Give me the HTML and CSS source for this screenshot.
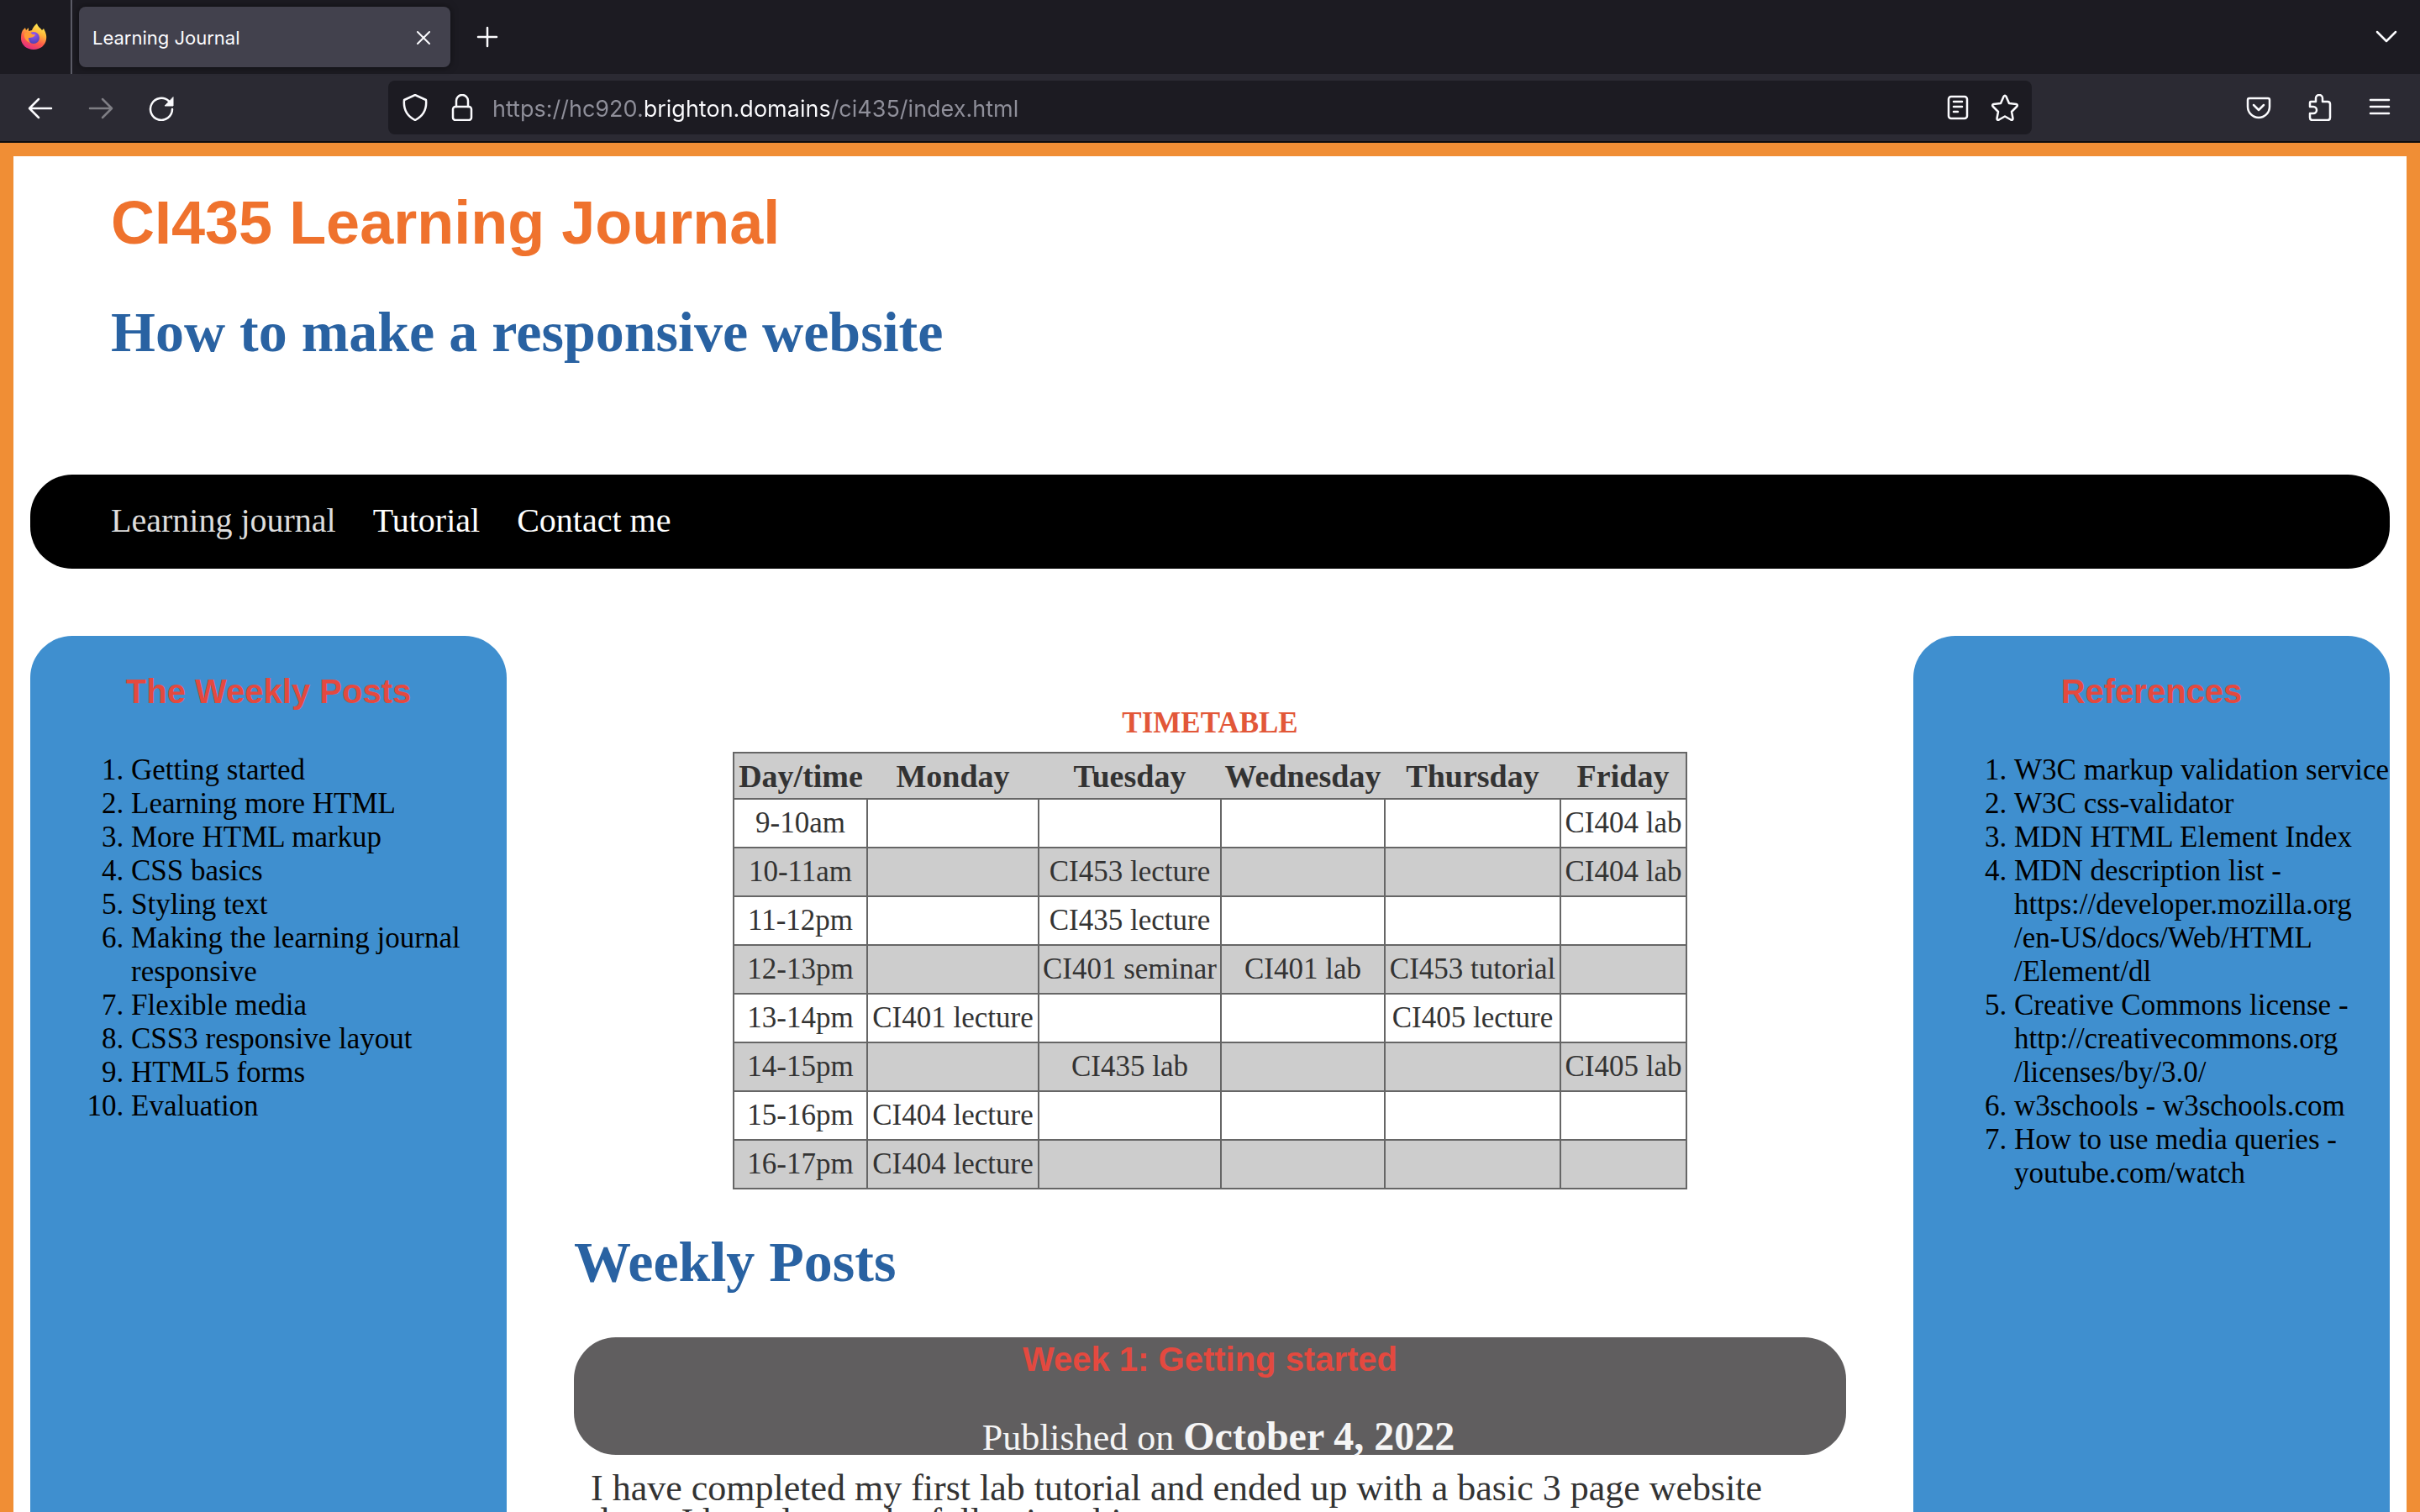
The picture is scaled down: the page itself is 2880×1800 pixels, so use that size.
FILE: index.html
```html
<!DOCTYPE html>
<html lang="en">
<head>
<meta charset="utf-8">
<title>Learning Journal</title>
<link rel="stylesheet" href="styles.css">
</head>
<body>
<div class="browser">
  <div class="tabs">
    <svg class="firefox" viewBox="0 0 32 32" aria-hidden="true">
      <defs>
        <linearGradient id="flame" x1="0.75" y1="0" x2="0.3" y2="1">
          <stop offset="0" stop-color="#fff255"/><stop offset="0.35" stop-color="#ffb53a"/><stop offset="0.65" stop-color="#ff5b4a"/><stop offset="1" stop-color="#e02a86"/>
        </linearGradient>
        <radialGradient id="globe" cx="0.5" cy="0.2" r="0.8">
          <stop offset="0" stop-color="#9b55f5"/><stop offset="1" stop-color="#4f42b5"/>
        </radialGradient>
      </defs>
      <path fill="url(#flame)" d="M3 8 6 5l1 3 3-3v4l4-1c1-3 3-6 6-8 1 4 4 5 6 8l2-2c2 4 4 8 3 13-1 7-7 12-15 12S2 26 1 19c0-4 0-8 2-11z"/>
      <circle cx="16" cy="17" r="7" fill="url(#globe)"/>
      <path fill="#ff9a36" d="M5 12c4-3 7-2 10 1h3c-1 3-4 4-8 4 0 3 1 4 2 6-5-2-8-6-7-11z"/>
    </svg>
    <div class="tab">
      <span class="tab-title">Learning Journal</span>
      <button class="icon-button" type="button" aria-label="Close tab">
        <svg viewBox="0 0 32 32"><path class="thin" d="M9 9l14 14M23 9L9 23"/></svg>
      </button>
    </div>
    <button class="icon-button new-tab" type="button" aria-label="New tab">
      <svg viewBox="0 0 32 32"><path d="M16 5v22M5 16h22"/></svg>
    </button>
    <button class="icon-button all-tabs" type="button" aria-label="List all tabs">
      <svg viewBox="0 0 32 32"><path d="M5 10l11 11 11-11"/></svg>
    </button>
  </div>
  <div class="toolbar">
    <div class="icon-group">
      <button class="icon-button" type="button" aria-label="Back">
        <svg viewBox="0 0 32 32"><path d="M29 17H4M14 6L3 17l11 11"/></svg>
      </button>
      <button class="icon-button" type="button" aria-label="Forward" disabled>
        <svg viewBox="0 0 32 32"><path d="M3 17h25M18 6l11 11-11 11"/></svg>
      </button>
      <button class="icon-button" type="button" aria-label="Reload">
        <svg viewBox="0 0 32 32"><path d="M29 18a13 13 0 1 1-4-9.500"/><path class="solid" d="M30 4v10H20.500z"/></svg>
      </button>
    </div>
    <div class="spacer"></div>
    <div class="address">
      <div class="address-icons">
        <button class="icon-button" type="button" aria-label="Tracking protection">
          <svg viewBox="0 0 32 32"><path d="M16 1l13 6c1 10-3 19-13 24C6 26 2 17 3 7z"/></svg>
        </button>
        <button class="icon-button" type="button" aria-label="Site information">
          <svg viewBox="0 0 32 32"><rect x="5" y="15" width="22" height="16" rx="3"/><path d="M9 15V8a7 7 0 0 1 14 0v7"/></svg>
        </button>
      </div>
      <input class="url" type="text" aria-label="Address" value="https://hc920.brighton.domains/ci435/index.html">
      <div class="address-icons">
        <button class="icon-button" type="button" aria-label="Reader view">
          <svg viewBox="0 0 32 32"><rect x="5" y="3" width="22" height="26" rx="3"/><path d="M11 9h10M11 15h10M11 21h5"/></svg>
        </button>
        <button class="icon-button" type="button" aria-label="Bookmark this page">
          <svg viewBox="0 0 32 32"><path d="M14.500 3q1.500-2.500 3 0l3.500 8 8.500 1q2.500 1 .5 3l-6 6 1.500 8q0 2.500-2.500 1.500L16 26.500 9 30.500q-2.500 1-2.500-1.500L8 21l-6-6q-2-2 .5-3l8.500-1z"/></svg>
        </button>
      </div>
    </div>
    <div class="spacer"></div>
    <div class="icon-group">
      <button class="icon-button" type="button" aria-label="Save to Pocket">
        <svg viewBox="0 0 32 32"><path d="M5 5h22a2 2 0 0 1 2 2v8a13 13 0 0 1-26 0V7a2 2 0 0 1 2-2zM10 13l6 6 6-6"/></svg>
      </button>
      <button class="icon-button" type="button" aria-label="Extensions">
        <svg viewBox="0 0 32 32"><path d="M6 9h6V5a4 4 0 0 1 8 0v4h6q3 0 3 3v16q0 3-3 3H8q-3 0-3-3v-5h4a4 4 0 0 0 0-8H5v-4q0-2 1-2z"/></svg>
      </button>
      <button class="icon-button" type="button" aria-label="Open menu">
        <svg viewBox="0 0 32 32"><path d="M5 7h22M5 15h22M5 23h22"/></svg>
      </button>
    </div>
  </div>
</div>

<div class="viewport">
  <div class="site">
    <header class="masthead">
      <h1>CI435 Learning Journal</h1>
      <h2>How to make a responsive website</h2>
    </header>
    <nav class="menu">
      <a class="current" href="#journal">Learning journal</a>
      <a href="#tutorial">Tutorial</a>
      <a href="#contact">Contact me</a>
    </nav>
    <div class="columns">
      <aside class="card">
        <h3>The Weekly Posts</h3>
        <ol>
          <li>Getting started</li>
          <li>Learning more HTML</li>
          <li>More HTML markup</li>
          <li>CSS basics</li>
          <li>Styling text</li>
          <li>Making the learning journal responsive</li>
          <li>Flexible media</li>
          <li>CSS3 responsive layout</li>
          <li>HTML5 forms</li>
          <li>Evaluation</li>
        </ol>
      </aside>
      <main class="journal" id="journal">
        <table class="timetable">
          <caption>TIMETABLE</caption>
          <colgroup><col class="c-time"><col class="c-mon"><col class="c-tue"><col class="c-wed"><col class="c-thu"><col class="c-fri"></colgroup>
          <thead>
            <tr><th scope="col">Day/time</th><th scope="col">Monday</th><th scope="col">Tuesday</th><th scope="col">Wednesday</th><th scope="col">Thursday</th><th scope="col">Friday</th></tr>
          </thead>
          <tbody>
            <tr><td>9-10am</td><td></td><td></td><td></td><td></td><td>CI404 lab</td></tr>
            <tr><td>10-11am</td><td></td><td>CI453 lecture</td><td></td><td></td><td>CI404 lab</td></tr>
            <tr><td>11-12pm</td><td></td><td>CI435 lecture</td><td></td><td></td><td></td></tr>
            <tr><td>12-13pm</td><td></td><td>CI401 seminar</td><td>CI401 lab</td><td>CI453 tutorial</td><td></td></tr>
            <tr><td>13-14pm</td><td>CI401 lecture</td><td></td><td></td><td>CI405 lecture</td><td></td></tr>
            <tr><td>14-15pm</td><td></td><td>CI435 lab</td><td></td><td></td><td>CI405 lab</td></tr>
            <tr><td>15-16pm</td><td>CI404 lecture</td><td></td><td></td><td></td><td></td></tr>
            <tr><td>16-17pm</td><td>CI404 lecture</td><td></td><td></td><td></td><td></td></tr>
          </tbody>
        </table>
        <h2>Weekly Posts</h2>
        <article>
          <header class="post-header">
            <h3>Week 1: Getting started</h3>
            <p>Published on <strong>October 4, 2022</strong></p>
          </header>
          <p class="post-text">I have completed my first lab tutorial and ended up with a basic 3 page website done. I have learnt the following things:</p>
        </article>
      </main>
      <aside class="card">
        <h3>References</h3>
        <ol>
          <li>W3C markup validation service</li>
          <li>W3C css-validator</li>
          <li>MDN HTML Element Index</li>
          <li>MDN description list - https://developer.mozilla.org<wbr>/en-US/docs/Web/HTML<wbr>/Element/dl</li>
          <li>Creative Commons license - http://creativecommons.org<wbr>/licenses/by/3.0/</li>
          <li>w3schools - w3schools.com</li>
          <li>How to use media queries - youtube.com/watch</li>
        </ol>
      </aside>
    </div>
  </div>
</div>
</body>
</html>
```
FILE: styles.css
```css
* { box-sizing: border-box; }

body {
  margin: 0;
  height: 100vh;
  display: flex;
  flex-direction: column;
  background: #fff;
  color: #333;
  font-family: Georgia, "Liberation Serif", serif;
}

h1, h2, h3, p, ol { margin: 0; }

/* Browser frame */
.browser {
  flex: none;
  font-family: Inter, "Liberation Sans", sans-serif;
  color: #fbfbfe;
  border-bottom: 2px solid #0c0c0d;
}

.tabs {
  display: flex;
  align-items: center;
  height: 88px;
  padding-right: 24px;
  background: #1c1b22;
}

.firefox { flex: none; width: 32px; height: 32px; margin: 0 28px 0 24px; }

.tabs::before { content: ""; order: 1; align-self: stretch; width: 2px; background: #5b5b66; }
.tab, .new-tab, .all-tabs { order: 2; }

.tab {
  display: flex;
  align-items: center;
  justify-content: space-between;
  width: 442px;
  height: 72px;
  margin: 0 28px 0 8px;
  padding: 2px 16px 0;
  border-radius: 8px;
  background: #42414d;
  box-shadow: 0 0 8px rgba(0, 0, 0, 0.5);
  font-size: 22px;
}

.all-tabs { margin-left: auto; }

.icon-button {
  flex: none;
  width: 32px;
  height: 32px;
  padding: 0;
  border: 0;
  background: none;
  color: inherit;
}
.icon-button:disabled { opacity: 0.4; }
.icon-button svg {
  display: block;
  width: 32px;
  height: 32px;
  fill: none;
  stroke: currentColor;
  stroke-width: 2.5;
  stroke-linecap: round;
  stroke-linejoin: round;
}
.icon-button .thin { stroke-width: 2; }
.icon-button .solid { fill: currentColor; stroke-width: 1; }

.toolbar {
  display: flex;
  align-items: center;
  height: 80px;
  padding: 0 32px;
  background: #2b2a33;
}
.icon-group { display: flex; gap: 40px; }
.spacer { flex: 33 1 0; }

.address {
  flex: 250 1 0;
  display: flex;
  align-items: center;
  gap: 20px;
  height: 64px;
  padding: 0 16px;
  border-radius: 8px;
  background: #1c1b22;
}
.address-icons { display: flex; gap: 24px; }

/* The registered domain is drawn brighter than the rest of the address. */
.url {
  flex: 1;
  min-width: 0;
  height: 42px;
  padding: 2px 0 0;
  border: 0;
  outline: 0;
  font: 27px/40px Inter, "Liberation Sans", sans-serif;
  color: transparent;
  background: linear-gradient(90deg, #8f8f9a 182px, #fbfbfe 182px, #fbfbfe 403px, #8f8f9a 403px);
  -webkit-background-clip: text;
  background-clip: text;
}

/* Web page */
.viewport {
  flex: 1;
  min-height: 0;
  overflow-y: auto;
  scrollbar-width: none;
}

.site {
  min-height: 100%;
  padding: 37px 20px 0;
  border: 16px solid #f08e35;
}

h1 {
  font: bold 72px/84px Helvetica, "Liberation Sans", sans-serif;
  color: #ef722d;
}
h2 {
  font-size: 68px;
  line-height: 76px;
  color: #2962a2;
}
h3 {
  font: bold 40px/48px Helvetica, "Liberation Sans", sans-serif;
  text-align: center;
  color: #e4493f;
}

.masthead { padding: 0 96px 132px; }
.masthead h2 { margin-top: 50px; }

.menu {
  display: flex;
  gap: 44px;
  padding: 31px 96px 33px;
  border-radius: 50px;
  background: #000;
  font-size: 40px;
  line-height: 48px;
}
.menu a { color: #fff; text-decoration: none; }
.menu .current { color: #ddd; }

.columns {
  display: grid;
  grid-template-columns: 567fr 1514fr 567fr;
  gap: 80px;
  margin-top: 80px;
}

.card {
  min-width: 0;
  padding-top: 42px;
  border-radius: 50px 50px 0 0;
  background: #3f8fcf;
  color: #000;
  font-size: 35px;
  line-height: 40px;
}
.card ol { margin-top: 50px; padding-left: 120px; }

.journal { min-width: 0; padding: 84px 0 120px; }

.timetable {
  width: 75%;
  margin: 0 auto;
  border: 2px solid #666;
  border-collapse: collapse;
  table-layout: fixed;
  font-size: 35px;
  line-height: 40px;
  text-align: center;
  white-space: nowrap;
}
.timetable caption { padding-bottom: 14px; font-weight: bold; color: #e25738; }
.timetable th { height: 55px; padding: 0; font-size: 38px; }
.timetable td { height: 58px; padding: 0; border: 2px solid #666; }
.timetable thead tr, .timetable tbody tr:nth-child(even) { background: #cdcdcd; }
.c-time { width: 159px; }
.c-mon { width: 204px; }
.c-tue { width: 217px; }
.c-wed { width: 195px; }
.c-thu { width: 209px; }
.c-fri { width: 150px; }

.journal h2 { margin: 48px 0 52px; }

.post-header {
  padding-top: 2px;
  border-radius: 50px;
  background: #605e5f;
  color: #f5f5f5;
  font-size: 44px;
  line-height: 40px;
  text-align: center;
}
.post-header p { margin-top: 48px; padding-left: 20px; }
.post-header strong { font-size: 48px; }

.post-text {
  padding: 20px 20px 0;
  font-size: 44px;
  line-height: 40px;
}
```
